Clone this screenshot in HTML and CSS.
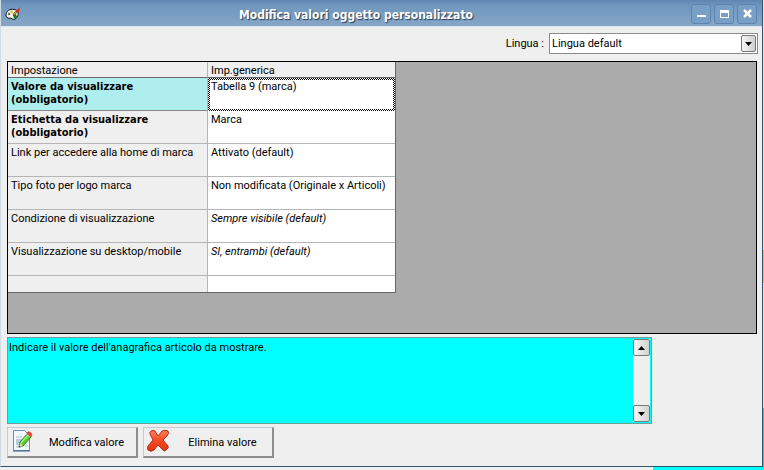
FILE: index.html
```
<!DOCTYPE html>
<html lang="it">
<head>
    <meta charset="UTF-8">
    <meta name="viewport" content="width=device-width, initial-scale=1.0">
    <title>Modifica valori oggetto personalizzato</title>
    <link rel="stylesheet" href="styles.css">
</head>
<body>
    <div class="window">
        <header class="titlebar">
            <svg class="app-icon" width="16" height="16" viewBox="0 0 16 16">
                <path d="M1 9C1 5 5 2.500 9 3.500C13 4 14.500 8 12 11C11 13 9 14 7 13C6 11 4 13 3 12C1.500 11.500 1 10.500 1 9Z" fill="#f4f4ea" stroke="#111"/>
                <circle cx="4" cy="8" r="1.200" fill="#4f7f3a"/>
                <circle cx="6.500" cy="6" r="1.200" fill="#d8b818"/>
                <path d="M8 9l3-1 1 3-3 2z" fill="#16802a"/>
                <path d="M8 8l3-3 1 1-3 4z" fill="#e8a020" stroke="#111" stroke-width=".5"/>
                <path d="M11 5l4-4-1 5-2 1z" fill="#e02818"/>
            </svg>
            <h1>Modifica valori oggetto personalizzato</h1>
            <div class="window-buttons">
                <button type="button" aria-label="Riduci a icona">
                    <svg width="18" height="18" viewBox="0 0 18 18"><path d="M5 10h9v2H5z" fill="#fff"/></svg>
                </button>
                <button type="button" aria-label="Ingrandisci">
                    <svg width="18" height="18" viewBox="0 0 18 18"><path d="M5 5h9v8H5zM6 8v4h7V8z" fill="#fff" fill-rule="evenodd"/></svg>
                </button>
                <button type="button" aria-label="Chiudi">
                    <svg width="18" height="18" viewBox="0 0 18 18"><path d="M6 5l7 7M13 5l-7 7" stroke="#fff" stroke-width="2.500"/></svg>
                </button>
            </div>
        </header>
        <main>
            <div class="language">
                <label for="lingua">Lingua :</label>
                <div class="combo">
                    <select id="lingua">
                        <option>Lingua default</option>
                    </select>
                    <span class="combo-arrow"><svg width="7" height="4" viewBox="0 0 7 4"><path d="M0 0h7L3.500 4z"/></svg></span>
                </div>
            </div>

            <div class="grid-area">
                <table>
                    <thead>
                        <tr><th>Impostazione</th><th>Imp.generica</th></tr>
                    </thead>
                    <tbody>
                        <tr class="required selected"><th>Valore da visualizzare (obbligatorio)</th><td>Tabella 9 (marca)</td></tr>
                        <tr class="required"><th>Etichetta da visualizzare (obbligatorio)</th><td>Marca</td></tr>
                        <tr><th>Link per accedere alla home di marca</th><td>Attivato (default)</td></tr>
                        <tr><th>Tipo foto per logo marca</th><td>Non modificata (Originale x Articoli)</td></tr>
                        <tr class="default"><th>Condizione di visualizzazione</th><td>Sempre visibile (default)</td></tr>
                        <tr class="default"><th>Visualizzazione su desktop/mobile</th><td>SI, entrambi (default)</td></tr>
                        <tr class="empty"><th></th><td></td></tr>
                    </tbody>
                </table>
            </div>

            <div class="help">
                <textarea aria-label="Descrizione" readonly>Indicare il valore dell'anagrafica articolo da mostrare.</textarea>
                <div class="scrollbar">
                    <button type="button" aria-label="Scorri su"><svg width="7" height="4" viewBox="0 0 7 4"><path d="M0 4h7L3.500 0z"/></svg></button>
                    <button type="button" aria-label="Scorri giù"><svg width="7" height="4" viewBox="0 0 7 4"><path d="M0 0h7L3.500 4z"/></svg></button>
                </div>
            </div>

            <div class="actions">
                <button type="button">
                    <svg width="24" height="24" viewBox="0 0 24 24">
                        <path d="M2.500 1.500h11l5 5v15h-16z" fill="#f3f8fe" stroke="#6c8fb8"/>
                        <path d="M2 22h17" stroke="#385f91"/>
                        <path d="M5 8h6M5 18h4M14 17h3" stroke="#a9bdd3"/>
                        <path d="M5 10h6v6H5z" fill="#b8cadd"/>
                        <path d="M8 18l1-5 7-8 4 3-8 9z" fill="#5bd02c" stroke="#23831b"/>
                        <path d="M10 14l7-8" stroke="#a9f27d" stroke-width="1.500"/>
                        <path d="M8 18l1-4 3 3z" fill="#f0d5a5"/>
                        <path d="M7.500 18.500l1-2 1 1z" fill="#333"/>
                        <path d="M15.500 4.500l4 3" stroke="#dde5ec" stroke-width="2"/>
                        <path d="M16 3.500c2-2 6 1 4.500 3.500L20 8l-4-3z" fill="#e94b32" stroke="#a83222" stroke-width=".5"/>
                    </svg>
                    <span>Modifica valore</span>
                </button>
                <button type="button">
                    <svg width="24" height="24" viewBox="0 0 24 24">
                        <defs>
                            <linearGradient id="red" x1="0" y1="0" x2="0" y2="1">
                                <stop offset="0" stop-color="#ff8260"/>
                                <stop offset=".5" stop-color="#f34b26"/>
                                <stop offset="1" stop-color="#e43311"/>
                            </linearGradient>
                        </defs>
                        <path d="M4 2Q6 .5 8 2L11 7L15 2Q18 .5 21 2Q22.500 4 20 7L16 11L21 17Q22 19 20 20L18 22Q16 22 14 19L11 16L7 21Q4 23.500 1 21Q0 19 1 17L6 11L3 5Q2.500 3 4 2Z" fill="url(#red)" stroke="#b92c16"/>
                    </svg>
                    <span>Elimina valore</span>
                </button>
            </div>
        </main>
    </div>
</body>
</html>
```

FILE: styles.css
```
* { box-sizing: border-box; }
body {
    margin: 0;
    height: 100vh;
    display: flex;
    padding: 0 1px 3px 0;
    background: linear-gradient(to right, #eef0f2 653px, #0ff 653px) bottom / 100% 3px no-repeat,
        linear-gradient(to bottom, #dfe9f2 250px, #c8cf30 250px, #c8cf30 283px, #dfe9f2 283px, #dfe9f2 408px, #12d6dc 408px);
}
body, button, select, textarea {
    font-family: Roboto, Tahoma, sans-serif;
    font-size: 11px;
    line-height: 13px;
    color: #000;
}
.window {
    flex: 1;
    display: flex;
    flex-direction: column;
    min-width: 0;
    background-color: #efefef;
    border: 1px solid #35526b;
    border-top: none;
    border-left-color: #d0dbe4;
}
.titlebar {
    display: flex;
    align-items: center;
    height: 27px;
    padding: 2px 5px 0 4px;
    background: linear-gradient(to bottom, #5d87b1, #6f97bf 5px, #86a6c6);
    border-bottom: 1px solid #dce8f3;
}
.titlebar h1 {
    flex: 1;
    margin: 0;
    padding-top: 2px;
    text-align: center;
    font-family: "DejaVu Sans Condensed", Tahoma, sans-serif;
    font-size: 12px;
    line-height: 16px;
    color: white;
    text-shadow: 1px 1px 1px #263c52;
}
.window-buttons {
    display: flex;
    gap: 3px;
}
.window-buttons button {
    width: 20px;
    height: 20px;
    padding: 0;
    background-color: #789fc5;
    border: 1px solid #5c84ad;
    border-radius: 3px;
}
svg { display: block; }
main {
    flex: 1;
    display: flex;
    flex-direction: column;
    padding: 6px 4px 8px 6px;
}
.language {
    display: flex;
    justify-content: flex-end;
    align-items: center;
    gap: 5px;
    margin-bottom: 7px;
}
.combo {
    position: relative;
    width: 209px;
}
.combo select {
    display: block;
    width: 100%;
    height: 21px;
    padding: 0 20px 0 2px;
    appearance: none;
    background-color: white;
    border: 1px solid #8b8b8b;
    border-radius: 0;
}
.combo-arrow {
    position: absolute;
    top: 2px;
    right: 2px;
    width: 15px;
    height: 17px;
    display: flex;
    align-items: center;
    justify-content: center;
    background: linear-gradient(to right, #f6f6f6, #cfcfcf);
    border: 1px solid #777;
    border-radius: 2px;
    pointer-events: none;
}
.grid-area {
    flex: 1;
    margin-right: 1px;
    background-color: #ababab;
    border: 1px solid #000;
}
table {
    width: 388px;
    table-layout: fixed;
    border-collapse: separate;
    border-spacing: 0;
    border-right: 1px solid #666;
    border-bottom: 1px solid #666;
}
th, td {
    height: 33px;
    padding: 2px 2px 0 3px;
    text-align: left;
    vertical-align: top;
    font-weight: normal;
    border-right: 1px solid #b5b5b5;
    border-bottom: 1px solid #b5b5b5;
}
th { background-color: #efefef; }
th:first-child { width: 200px; }
td { background-color: white; }
th:last-child, td:last-child { border-right: none; }
thead th {
    height: 16px;
    border-bottom-color: #666;
}
.required th {
    padding-right: 50px;
    font-family: "DejaVu Sans Condensed", Tahoma, sans-serif;
    font-weight: bold;
}
.selected th {
    background-color: #afeeee;
    border-bottom-color: #888;
}
/* focused cell */
.selected td:last-child {
    padding: 0 0 0 1px;
    border: 2px solid transparent;
    background: linear-gradient(white, white) padding-box,
        repeating-conic-gradient(#000 0 25%, #fff 0 50%) 0 0 / 2px 2px border-box;
}
.default td { font-style: italic; }
.empty th, .empty td {
    height: 16px;
    padding: 0;
    border-bottom: none;
}
.help {
    display: flex;
    width: 645px;
    height: 87px;
    margin-top: 3px;
    padding: 1px;
    background-color: #0ff;
    border: 1px solid #6f9c9c;
}
.help textarea {
    flex: 1;
    padding: 2px 0;
    resize: none;
    overflow: hidden;
    background-color: #0ff;
    border: none;
    outline: none;
}
.scrollbar {
    display: flex;
    flex-direction: column;
    justify-content: space-between;
    width: 17px;
    background-color: #efefef;
}
.scrollbar button {
    display: flex;
    align-items: center;
    justify-content: center;
    height: 17px;
    padding: 0;
    background: linear-gradient(to right, #f6f6f6, #d2d2d2);
    border: 1px solid #777;
    border-radius: 2px;
}
.actions {
    display: flex;
    gap: 5px;
    margin-top: 3px;
}
.actions button {
    display: flex;
    align-items: center;
    width: 131px;
    height: 31px;
    padding: 0 4px 3px 3px;
    background-color: #efefef;
    border: 1px solid #c3cdd5;
    border-right: 2px solid #8d8d8d;
    border-bottom: 2px solid #8d8d8d;
}
.actions span {
    flex: 1;
    padding: 3px 0 0 6px;
    text-align: center;
}
```
